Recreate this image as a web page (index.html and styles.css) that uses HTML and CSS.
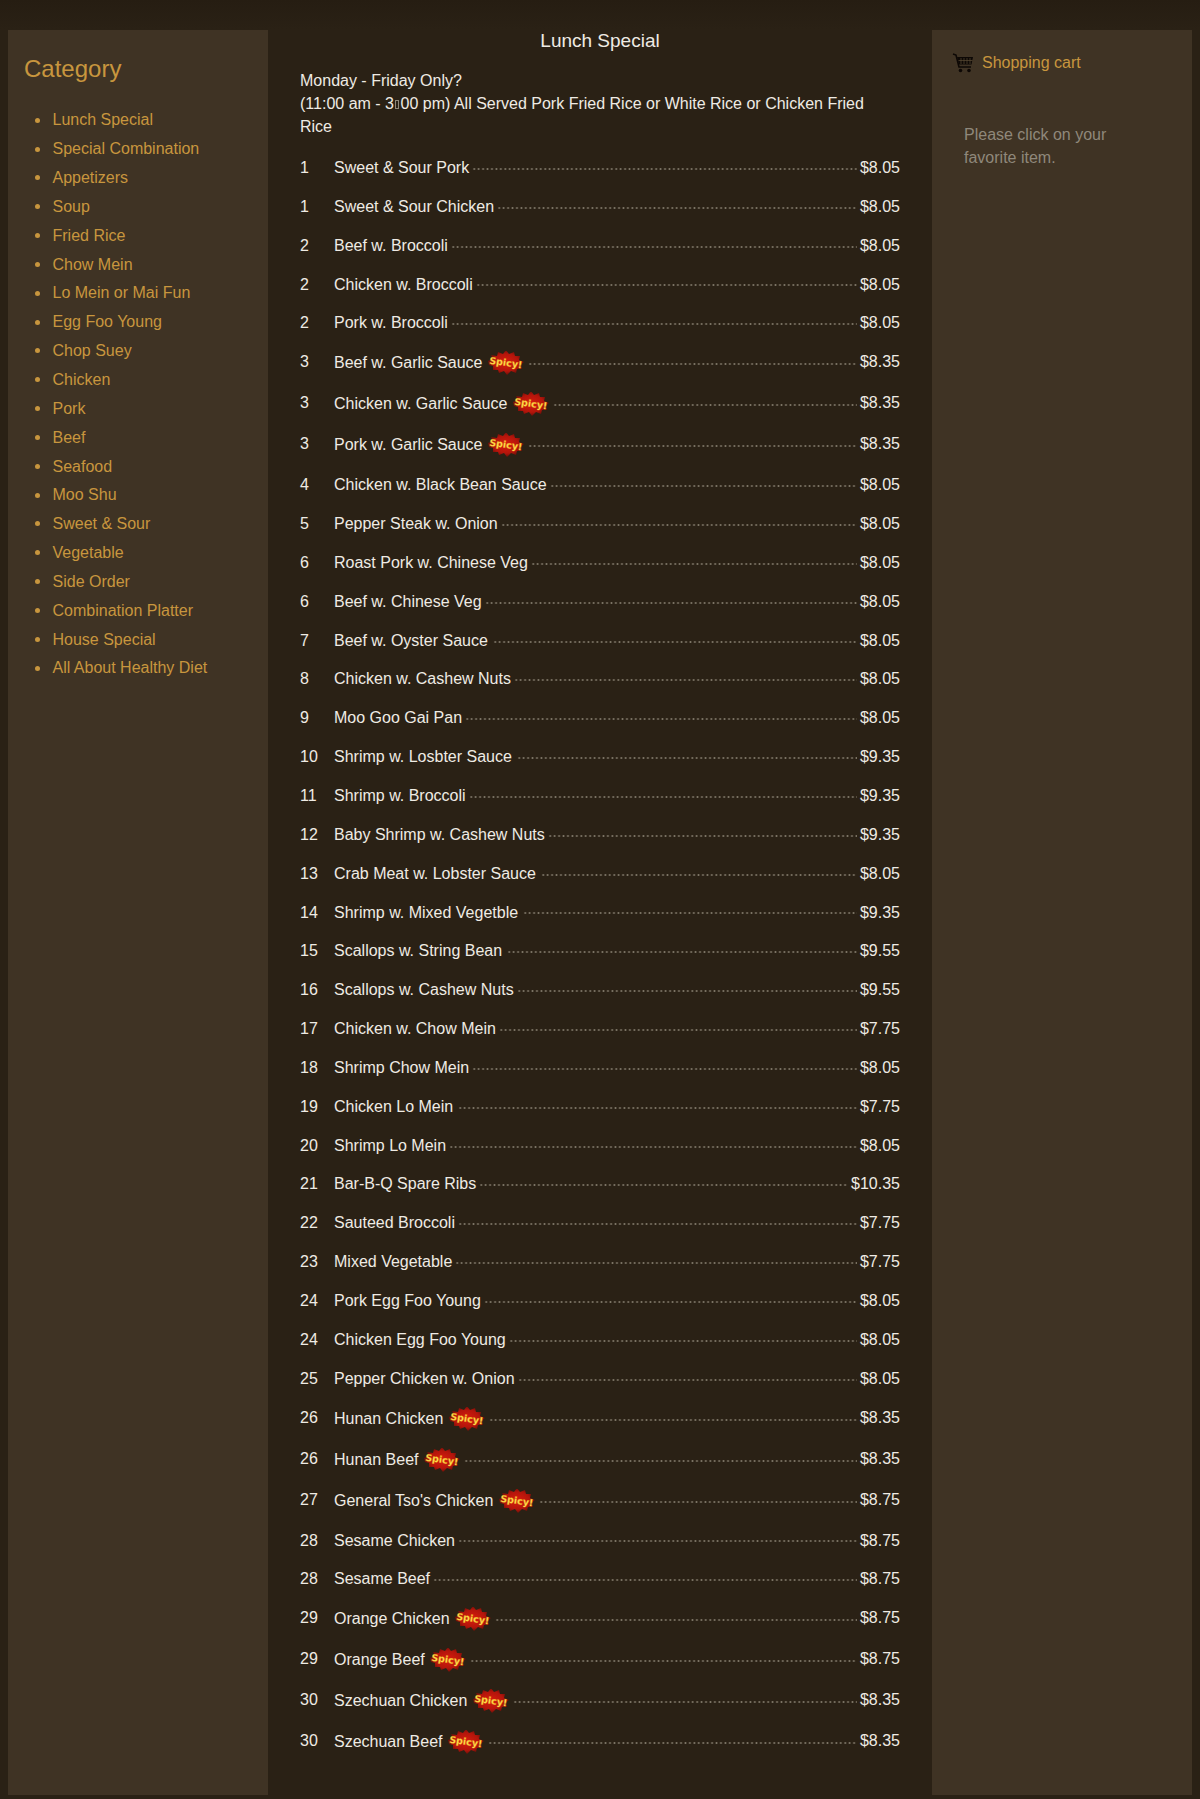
FILE: index.html
```html
<!DOCTYPE html>
<html lang="en">
<head>
  <meta charset="UTF-8">
  <title>Lunch Special</title>
  <link rel="stylesheet" href="styles.css">
</head>
<body>
  <svg class="defs" width="0" height="0">
    <defs>
      <radialGradient id="burstFill">
        <stop offset="0" stop-color="#d81c0e"/>
        <stop offset="0.7" stop-color="#b3150b"/>
        <stop offset="1" stop-color="#6d0f08"/>
      </radialGradient>
      <polygon id="burst" fill="url(#burstFill)" points="1,11 6,9 4,5 10,6 11,2 16,4 19,0 22,4 27,2 28,6 33,6 32,10 37,12 33,15 35,19 30,19 29,23 24,21 20,25 17,21 12,23 11,20 6,20 6,16 2,15"/>
    </defs>
  </svg>

  <div class="page">
    <aside class="side">
      <h2 class="side-title">Category</h2>
      <ul class="cat-list">
        <li>Lunch Special</li>
        <li>Special Combination</li>
        <li>Appetizers</li>
        <li>Soup</li>
        <li>Fried Rice</li>
        <li>Chow Mein</li>
        <li>Lo Mein or Mai Fun</li>
        <li>Egg Foo Young</li>
        <li>Chop Suey</li>
        <li>Chicken</li>
        <li>Pork</li>
        <li>Beef</li>
        <li>Seafood</li>
        <li>Moo Shu</li>
        <li>Sweet &amp; Sour</li>
        <li>Vegetable</li>
        <li>Side Order</li>
        <li>Combination Platter</li>
        <li>House Special</li>
        <li>All About Healthy Diet</li>
      </ul>
    </aside>

    <main class="menu">
      <h3 class="menu-title">Lunch Special</h3>
      <p class="menu-note"><span class="note-line">Monday - Friday Only?</span>(11:00 am - 3<span class="tofu"></span>00 pm) All Served Pork Fried Rice or White Rice or Chicken Fried Rice</p>

      <div class="row"><span class="num">1</span><span class="name">Sweet &amp; Sour Pork</span><span class="dots"></span><span class="price">$8.05</span></div>
      <div class="row"><span class="num">1</span><span class="name">Sweet &amp; Sour Chicken</span><span class="dots"></span><span class="price">$8.05</span></div>
      <div class="row"><span class="num">2</span><span class="name">Beef w. Broccoli</span><span class="dots"></span><span class="price">$8.05</span></div>
      <div class="row"><span class="num">2</span><span class="name">Chicken w. Broccoli</span><span class="dots"></span><span class="price">$8.05</span></div>
      <div class="row"><span class="num">2</span><span class="name">Pork w. Broccoli</span><span class="dots"></span><span class="price">$8.05</span></div>
      <div class="row"><span class="num">3</span><span class="name">Beef w. Garlic Sauce <svg class="spicy" viewBox="0 1 38 25"><use href="#burst"/><text class="burst-text" x="19" y="16" transform="rotate(8 19 12)">Spicy!</text></svg></span><span class="dots"></span><span class="price">$8.35</span></div>
      <div class="row"><span class="num">3</span><span class="name">Chicken w. Garlic Sauce <svg class="spicy" viewBox="0 1 38 25"><use href="#burst"/><text class="burst-text" x="19" y="16" transform="rotate(8 19 12)">Spicy!</text></svg></span><span class="dots"></span><span class="price">$8.35</span></div>
      <div class="row"><span class="num">3</span><span class="name">Pork w. Garlic Sauce <svg class="spicy" viewBox="0 1 38 25"><use href="#burst"/><text class="burst-text" x="19" y="16" transform="rotate(8 19 12)">Spicy!</text></svg></span><span class="dots"></span><span class="price">$8.35</span></div>
      <div class="row"><span class="num">4</span><span class="name">Chicken w. Black Bean Sauce</span><span class="dots"></span><span class="price">$8.05</span></div>
      <div class="row"><span class="num">5</span><span class="name">Pepper Steak w. Onion</span><span class="dots"></span><span class="price">$8.05</span></div>
      <div class="row"><span class="num">6</span><span class="name">Roast Pork w. Chinese Veg</span><span class="dots"></span><span class="price">$8.05</span></div>
      <div class="row"><span class="num">6</span><span class="name">Beef w. Chinese Veg</span><span class="dots"></span><span class="price">$8.05</span></div>
      <div class="row"><span class="num">7</span><span class="name gap">Beef w. Oyster Sauce</span><span class="dots"></span><span class="price">$8.05</span></div>
      <div class="row"><span class="num">8</span><span class="name">Chicken w. Cashew Nuts</span><span class="dots"></span><span class="price">$8.05</span></div>
      <div class="row"><span class="num">9</span><span class="name">Moo Goo Gai Pan</span><span class="dots"></span><span class="price">$8.05</span></div>
      <div class="row"><span class="num">10</span><span class="name gap">Shrimp w. Losbter Sauce</span><span class="dots"></span><span class="price">$9.35</span></div>
      <div class="row"><span class="num">11</span><span class="name">Shrimp w. Broccoli</span><span class="dots"></span><span class="price">$9.35</span></div>
      <div class="row"><span class="num">12</span><span class="name">Baby Shrimp w. Cashew Nuts</span><span class="dots"></span><span class="price">$9.35</span></div>
      <div class="row"><span class="num">13</span><span class="name gap">Crab Meat w. Lobster Sauce</span><span class="dots"></span><span class="price">$8.05</span></div>
      <div class="row"><span class="num">14</span><span class="name gap">Shrimp w. Mixed Vegetble</span><span class="dots"></span><span class="price">$9.35</span></div>
      <div class="row"><span class="num">15</span><span class="name gap">Scallops w. String Bean</span><span class="dots"></span><span class="price">$9.55</span></div>
      <div class="row"><span class="num">16</span><span class="name">Scallops w. Cashew Nuts</span><span class="dots"></span><span class="price">$9.55</span></div>
      <div class="row"><span class="num">17</span><span class="name">Chicken w. Chow Mein</span><span class="dots"></span><span class="price">$7.75</span></div>
      <div class="row"><span class="num">18</span><span class="name">Shrimp Chow Mein</span><span class="dots"></span><span class="price">$8.05</span></div>
      <div class="row"><span class="num">19</span><span class="name gap">Chicken Lo Mein</span><span class="dots"></span><span class="price">$7.75</span></div>
      <div class="row"><span class="num">20</span><span class="name">Shrimp Lo Mein</span><span class="dots"></span><span class="price">$8.05</span></div>
      <div class="row"><span class="num">21</span><span class="name">Bar-B-Q Spare Ribs</span><span class="dots"></span><span class="price">$10.35</span></div>
      <div class="row"><span class="num">22</span><span class="name">Sauteed Broccoli</span><span class="dots"></span><span class="price">$7.75</span></div>
      <div class="row"><span class="num">23</span><span class="name">Mixed Vegetable</span><span class="dots"></span><span class="price">$7.75</span></div>
      <div class="row"><span class="num">24</span><span class="name">Pork Egg Foo Young</span><span class="dots"></span><span class="price">$8.05</span></div>
      <div class="row"><span class="num">24</span><span class="name">Chicken Egg Foo Young</span><span class="dots"></span><span class="price">$8.05</span></div>
      <div class="row"><span class="num">25</span><span class="name">Pepper Chicken w. Onion</span><span class="dots"></span><span class="price">$8.05</span></div>
      <div class="row"><span class="num">26</span><span class="name">Hunan Chicken <svg class="spicy" viewBox="0 1 38 25"><use href="#burst"/><text class="burst-text" x="19" y="16" transform="rotate(8 19 12)">Spicy!</text></svg></span><span class="dots"></span><span class="price">$8.35</span></div>
      <div class="row"><span class="num">26</span><span class="name">Hunan Beef <svg class="spicy" viewBox="0 1 38 25"><use href="#burst"/><text class="burst-text" x="19" y="16" transform="rotate(8 19 12)">Spicy!</text></svg></span><span class="dots"></span><span class="price">$8.35</span></div>
      <div class="row"><span class="num">27</span><span class="name">General Tso's Chicken <svg class="spicy" viewBox="0 1 38 25"><use href="#burst"/><text class="burst-text" x="19" y="16" transform="rotate(8 19 12)">Spicy!</text></svg></span><span class="dots"></span><span class="price">$8.75</span></div>
      <div class="row"><span class="num">28</span><span class="name">Sesame Chicken</span><span class="dots"></span><span class="price">$8.75</span></div>
      <div class="row"><span class="num">28</span><span class="name">Sesame Beef</span><span class="dots"></span><span class="price">$8.75</span></div>
      <div class="row"><span class="num">29</span><span class="name">Orange Chicken <svg class="spicy" viewBox="0 1 38 25"><use href="#burst"/><text class="burst-text" x="19" y="16" transform="rotate(8 19 12)">Spicy!</text></svg></span><span class="dots"></span><span class="price">$8.75</span></div>
      <div class="row"><span class="num">29</span><span class="name">Orange Beef <svg class="spicy" viewBox="0 1 38 25"><use href="#burst"/><text class="burst-text" x="19" y="16" transform="rotate(8 19 12)">Spicy!</text></svg></span><span class="dots"></span><span class="price">$8.75</span></div>
      <div class="row"><span class="num">30</span><span class="name">Szechuan Chicken <svg class="spicy" viewBox="0 1 38 25"><use href="#burst"/><text class="burst-text" x="19" y="16" transform="rotate(8 19 12)">Spicy!</text></svg></span><span class="dots"></span><span class="price">$8.35</span></div>
      <div class="row"><span class="num">30</span><span class="name">Szechuan Beef <svg class="spicy" viewBox="0 1 38 25"><use href="#burst"/><text class="burst-text" x="19" y="16" transform="rotate(8 19 12)">Spicy!</text></svg></span><span class="dots"></span><span class="price">$8.35</span></div>
    </main>

    <aside class="side cart">
      <div class="cart-head">
        <svg class="cart-icon" viewBox="0 0 22 20">
          <path d="M1 1 L4 2 L7 14 H19" fill="none" stroke="#0d0805" stroke-width="1.6"/>
          <path d="M5 4 H21 L19.5 11.5 H7 Z" fill="#0d0805"/>
          <path d="M9 5 V11 M12 5 V11 M15 5 V11 M18 5 V11 M6.5 7.5 H20.5" stroke="#5a4a34" stroke-width="0.7"/>
          <circle cx="8.5" cy="17.5" r="1.8" fill="#0d0805"/>
          <circle cx="17" cy="17.5" r="1.8" fill="#0d0805"/>
        </svg>
        <span>Shopping cart</span>
      </div>
      <p class="cart-note">Please click on your favorite item.</p>
    </aside>
  </div>
</body>
</html>
```

FILE: styles.css
```css
* {
  box-sizing: border-box;
}
html {
  background: #2f2416;
}
body {
  margin: 0;
  height: 1799px;
  padding: 30px 8px 4px;
  font-family: "Liberation Sans", Arial, sans-serif;
  font-size: 16px;
  line-height: 1.42857;
  color: #efebe4;
  background: linear-gradient(to bottom, #261d12 0, #2a2115 30px, #2a2115 100%);
  overflow: hidden;
}
.defs {
  position: absolute;
}
.page {
  display: flex;
  height: 100%;
}

/* side columns */
.side {
  width: 260px;
  flex: none;
  padding: 0 16px;
  background: #3f3324;
  color: #c8963e;
}
.side-title {
  margin: 26px 0 27px;
  font-size: 24px;
  font-weight: normal;
  line-height: 1.1;
}
.cat-list {
  margin: 0;
  padding: 0 0 0 28.5px;
  list-style: none;
}
.cat-list li {
  margin-bottom: 6px;
}
.cat-list li::before {
  content: "";
  display: inline-block;
  width: 5px;
  height: 5px;
  margin: 0 13px 2px -18px;
  border-radius: 50%;
  background: #c8963e;
  vertical-align: middle;
}

/* middle column */
.menu {
  flex: 1;
  padding: 0 32px;
}
.menu-title {
  margin: 0;
  font-size: 19px;
  font-weight: normal;
  line-height: 22px;
  text-align: center;
}
.menu-note {
  margin: 17.5px 0 10px;
}
.note-line {
  display: block;
  margin-bottom: 1px;
}
/* the source page has a missing glyph here */
.tofu {
  display: inline-block;
  width: 4px;
  height: 9px;
  margin: 0 1.3px;
  border: 1px solid #8f8778;
}
.row {
  display: flex;
  padding: 8px 0;
}
.num {
  width: 34px;
  flex: none;
}
.name {
  flex: none;
}
.name.gap {
  padding-right: 2px;
}
/* leader is a row of period-sized dots */
.dots {
  flex: 1;
  align-self: center;
  height: 4px;
  margin: 1px 3px 0 3px;
  background-image: radial-gradient(circle, #7d7566 0.9px, transparent 1.1px);
  background-size: 4.445px 4px;
}
.price {
  flex: none;
}
.spicy {
  width: 38px;
  height: 25px;
  vertical-align: middle;
}
.burst-text {
  font-family: "DejaVu Sans", sans-serif;
  font-size: 9.5px;
  font-weight: bold;
  fill: #ffe04a;
  stroke: #e8861a;
  stroke-width: 0.3px;
  text-anchor: middle;
}

/* cart */
.cart {
  padding: 0 20px;
}
.cart-head {
  display: flex;
  align-items: center;
  gap: 8px;
  margin-top: 22px;
}
.cart-icon {
  width: 22px;
  height: 20px;
}
.cart-note {
  margin: 49px 24px 0 12px;
  color: #8f887b;
}
```
